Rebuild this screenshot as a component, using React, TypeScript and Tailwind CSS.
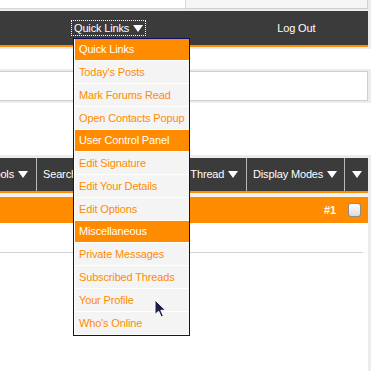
import React from 'react';

const Arrow = () => (
  <svg width="10" height="7" viewBox="0 0 10 7" className="inline-block shrink-0">
    <polygon points="0,0 10,0 5,7" fill="#ffffff" />
  </svg>
);

type MenuRow = { label: string; header?: boolean };

const menuRows: MenuRow[] = [
  { label: 'Quick Links', header: true },
  { label: "Today's Posts" },
  { label: 'Mark Forums Read' },
  { label: 'Open Contacts Popup' },
  { label: 'User Control Panel', header: true },
  { label: 'Edit Signature' },
  { label: 'Edit Your Details' },
  { label: 'Edit Options' },
  { label: 'Miscellaneous', header: true },
  { label: 'Private Messages' },
  { label: 'Subscribed Threads' },
  { label: 'Your Profile' },
  { label: "Who's Online" },
];

function QuickLinksMenu() {
  return (
    <div className="absolute left-[73px] top-[38px] w-[117px] border border-[#0c0c72] bg-white pl-px">
      {menuRows.map((row) =>
        row.header ? (
          <div
            key={row.label}
            className="flex h-[22px] items-center border-b border-white bg-[#ff8c00] pl-[4px] text-white"
          >
            {row.label}
          </div>
        ) : (
          <div
            key={row.label}
            className="flex h-[23px] items-center border-b border-white bg-[#f4f4f4] pl-[4px] text-[#ff8c00]"
          >
            {row.label}
          </div>
        )
      )}
    </div>
  );
}

function Cursor() {
  return (
    <svg width="14" height="20" viewBox="0 0 14 20" className="absolute left-[154px] top-[299px]">
      <path
        d="M1 1 L1 15.5 L4.6 12.2 L7.2 18 L9.4 17 L6.8 11.3 L11.6 11.3 Z"
        fill="#1b1d48"
        stroke="#ffffff"
        strokeWidth="1"
        strokeLinejoin="round"
      />
    </svg>
  );
}

export default function App() {
  return (
    <div className="relative h-[371px] w-[382px] overflow-hidden bg-white font-['Liberation_Sans',Arial,sans-serif] text-[11px] leading-none tracking-[-0.15px]">
      <div className="w-[371px]">
        {/* top strip left over from the header */}
        <div className="flex h-[9px] border-r-[3px] border-r-[#ececec]">
          <div className="w-[186px] border-b border-r border-[#d6d6d6] bg-white" />
          <div className="flex-1 border-b border-r border-[#d0d0d0] bg-[#f5f5f5]" />
        </div>
        <div className="h-[2px] bg-[#ececec]" />

        {/* navbar */}
        <div className="border-r-[3px] border-r-[#ececec]">
          <div className="flex h-[34px] items-center bg-[#3b3b3b] text-white">
            <div className="ml-[72px] flex h-[14px] items-center gap-[4px] outline-1 outline-dotted outline-white pl-[2px] pr-[2px]">
              <span>Quick Links</span>
              <Arrow />
            </div>
            <span className="ml-[132px]">Log Out</span>
          </div>
          <div className="h-[2px] bg-[#ff8c00]" />
        </div>
        <div className="h-[2px] bg-[#ececec]" />

        <div className="h-[20px]" />

        {/* empty box */}
        <div className="border-y-2 border-r-[3px] border-[#ececec]">
          <div className="h-[30px] border-y border-r border-[#cfcfcf] bg-white" />
        </div>

        <div className="h-[52px]" />

        {/* thread toolbar */}
        <div className="border-t-[3px] border-r-[3px] border-[#ececec]">
          <div className="flex h-[33px] bg-[#3b3b3b] text-white">
            <div className="flex w-[36px] items-center justify-end overflow-hidden pr-[8px]">
              <span className="flex shrink-0 items-center gap-[4px] whitespace-nowrap">
                Thread Tools <Arrow />
              </span>
            </div>
            <div className="w-px bg-[#b8b8b8]" />
            <div className="flex w-[120px] items-center gap-[4px] whitespace-nowrap pl-[6px]">
              Search this Thread <Arrow />
            </div>
            <div className="w-px bg-[#b8b8b8]" />
            <div className="flex w-[88px] items-center gap-[4px] whitespace-nowrap pl-[7px]">
              Rate Thread <Arrow />
            </div>
            <div className="w-px bg-[#b8b8b8]" />
            <div className="flex w-[97px] items-center gap-[4px] whitespace-nowrap pl-[6px]">
              Display Modes <Arrow />
            </div>
            <div className="w-px bg-[#b8b8b8]" />
            <div className="flex w-[23px] items-center justify-center">
              <Arrow />
            </div>
          </div>
          <div className="h-[2px] bg-[#ff8c00]" />
        </div>
        <div className="h-[4px] border-r-[3px] border-[#ececec] bg-[#f3f3f3]" />

        {/* post header */}
        <div className="border-r-[3px] border-[#ececec]">
          <div className="flex h-[26px] items-center justify-end bg-[#ff8c00] pr-[7px] text-white">
            <span className="font-bold">#1</span>
            <div className="ml-[12px] h-[14px] w-[13px] rounded-[3px] border border-[#8c8c8c] bg-gradient-to-b from-white to-[#dcdcdc]" />
          </div>
        </div>

        {/* post body */}
        <div className="h-[150px] border-r-[3px] border-[#ececec] bg-white pt-[29px]">
          <div className="h-px w-[363px] bg-[#d2d2d2]" />
        </div>
      </div>

      <QuickLinksMenu />
      <Cursor />
    </div>
  );
}
